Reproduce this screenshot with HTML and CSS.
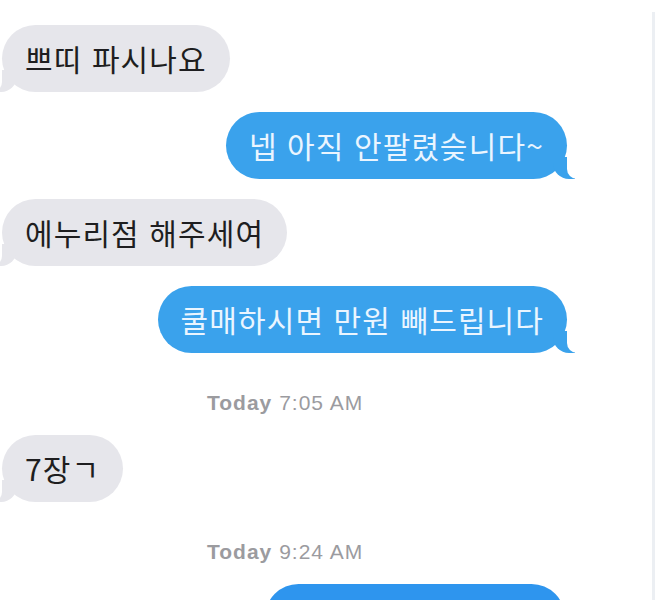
FILE: index.html
```html
<!DOCTYPE html>
<html lang="ko">
  <head>
    <meta charset="UTF-8" />
    <meta name="viewport" content="width=device-width, initial-scale=1.0" />
    <title>메시지</title>
    <link rel="stylesheet" href="styles.css">
  </head>
  <body>
    <div class="page">
      <div class="thread">
        <div class="row them">
          <div class="bubble them">쁘띠 파시나요</div>
        </div>
        <div class="row me">
          <div class="bubble me">넵 아직 안팔렸슺니다~</div>
        </div>
        <div class="row them">
          <div class="bubble them">에누리점 해주세여</div>
        </div>
        <div class="row me">
          <div class="bubble me">쿨매하시면 만원 빼드립니다</div>
        </div>

        <div class="stamp"><b>Today</b> 7:05 AM</div>

        <div class="row them">
          <div class="bubble them">7장ㄱ</div>
        </div>

        <div class="stamp"><b>Today</b> 9:24 AM</div>

        <div class="row me">
          <div class="bubble me last">&nbsp;</div>
        </div>
      </div>
    </div>
  </body>
</html>
```

FILE: styles.css
```css
* {
  margin: 0;
  padding: 0;
  box-sizing: border-box;
}

body {
  font-family: "Noto Sans CJK KR", "Noto Sans", sans-serif;
  background: #ffffff;
  height: 600px;
  overflow: hidden;
}

.page {
  display: flex;
  padding-top: 12px;
  height: 600px;
  overflow: hidden;
}

.thread {
  width: 655px;
  height: 588px;
  overflow: hidden;
  border-right: 3px solid #eceff3;
  padding-top: 13px;
  display: flex;
  flex-direction: column;
  gap: 20px;
}

.row {
  display: flex;
  flex-shrink: 0;
}

.row.them {
  justify-content: flex-start;
  padding-left: 2px;
}

.row.me {
  justify-content: flex-end;
  padding-right: 85px;
}

.bubble {
  position: relative;
  font-size: 30px;
  line-height: 35px;
  letter-spacing: 1.1px;
  padding: 16px 23px;
  border-radius: 34px;
  white-space: nowrap;
}

.bubble.them {
  background: #e6e6eb;
  color: #1e1e20;
}

.bubble.me {
  background: #3aa2ec;
  color: #eaf5ff;
}

/* tails */
.bubble::before,
.bubble::after {
  content: "";
  position: absolute;
  bottom: 0;
  height: 22px;
}

.bubble.them::before {
  left: -7px;
  width: 22px;
  background: #e6e6eb;
  border-bottom-right-radius: 16px;
}

.bubble.them::after {
  left: -10px;
  width: 10px;
  background: #ffffff;
  border-bottom-right-radius: 10px;
}

.bubble.me::before {
  right: -8px;
  width: 22px;
  background: #3aa2ec;
  border-bottom-left-radius: 16px;
}

.bubble.me::after {
  right: -10px;
  width: 10px;
  background: #ffffff;
  border-bottom-left-radius: 10px;
}

.bubble.last {
  width: 300px;
  margin-right: 2px;
  background: #2e95ee;
}

.bubble.last::before,
.bubble.last::after {
  display: none;
}

.stamp {
  flex-shrink: 0;
  margin-top: 18px;
  padding-left: 207px;
  font-family: "Liberation Sans", Arial, sans-serif;
  font-size: 21px;
  line-height: 24px;
  letter-spacing: 1px;
  color: #9b9b9f;
}

.stamp b {
  font-weight: 700;
}
```
